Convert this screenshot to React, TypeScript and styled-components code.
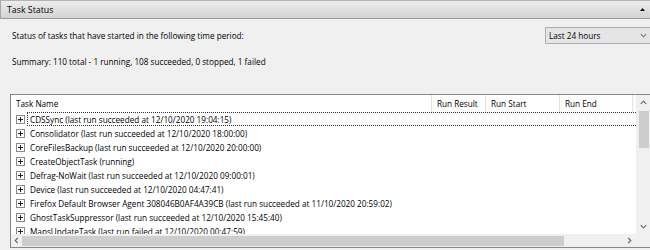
import React from 'react';
import styled, { createGlobalStyle } from 'styled-components';

const GlobalStyle = createGlobalStyle`
  html, body {
    margin: 0;
    padding: 0;
    background: #f0f0f0;
  }
  body {
    width: 650px;
    height: 250px;
    overflow: hidden;
    font-family: "Open Sans", "Noto Sans", sans-serif;
    font-size: 8.2px;
    color: #000;
  }
`;

const tasks = [
  'CDSSync (last run succeeded at 12/10/2020 19:04:15)',
  'Consolidator (last run succeeded at 12/10/2020 18:00:00)',
  'CoreFilesBackup (last run succeeded at 12/10/2020 20:00:00)',
  'CreateObjectTask (running)',
  'Defrag-NoWait (last run succeeded at 12/10/2020 09:00:01)',
  'Device (last run succeeded at 12/10/2020 04:47:41)',
  'Firefox Default Browser Agent 308046B0AF4A39CB (last run succeeded at 11/10/2020 20:59:02)',
  'GhostTaskSuppressor (last run succeeded at 12/10/2020 15:45:40)',
  'MapsUpdateTask (last run failed at 12/10/2020 00:47:59)',
];

const columns = [
  { title: 'Task Name', width: 421 },
  { title: 'Run Result', width: 54 },
  { title: 'Run Start', width: 74 },
  { title: 'Run End', width: 73 },
];

const Panel = styled.div`
  width: 650px;
  height: 250px;
  display: flex;
  flex-direction: column;
  background: #f0f0f0;
`;

const TitleBar = styled.div`
  height: 17px;
  display: flex;
  align-items: center;
  justify-content: space-between;
  padding: 0 5px 0 6px;
  background: linear-gradient(#ededed, #d3d3d3);
  border-top: 1px solid #b4b4b4;
  border-left: 1px solid #a8a8a8;
  border-bottom: 1px solid #9c9c9c;
  font-size: 8.8px;
`;

const Body = styled.div`
  flex: 1;
  display: flex;
  flex-direction: column;
  padding: 8px 0 0 12px;
  min-height: 0;
`;

const PeriodRow = styled.div`
  display: flex;
  align-items: center;
  justify-content: space-between;
  height: 17px;
`;

const Dropdown = styled.div`
  box-sizing: border-box;
  width: 105px;
  height: 17px;
  display: flex;
  align-items: center;
  justify-content: space-between;
  padding: 0 3px 0 3px;
  background: #e5e5e5;
  border: 1px solid #adadad;
  border-right: none;
`;

const Summary = styled.div`
  margin-top: 12px;
`;

const Frame = styled.div`
  margin: 27px 0 0 -2px;
  width: 640px;
  height: 152px;
  border: 1px solid #828790;
  border-right: none;
  background: #fff;
  display: grid;
  grid-template-columns: 1fr 15px;
  grid-template-rows: 139px 13px;
`;

const ListArea = styled.div`
  overflow: hidden;
  display: flex;
  flex-direction: column;
`;

const HeaderRow = styled.div`
  height: 17px;
  display: flex;
  flex-shrink: 0;
`;

const HeaderCell = styled.div<{ $width: number }>`
  width: ${(p) => p.$width}px;
  flex-shrink: 0;
  box-sizing: border-box;
  padding-left: 5px;
  display: flex;
  align-items: center;
  border-right: 1px solid #e5e5e5;
`;

const TreeRow = styled.div`
  height: 14px;
  display: flex;
  align-items: center;
  padding-left: 5px;
  flex-shrink: 0;
  white-space: nowrap;
`;

const ExpandBox = styled.svg`
  width: 9px;
  height: 9px;
  flex-shrink: 0;
`;

const RowLabel = styled.div<{ $focused?: boolean }>`
  flex: 1;
  height: 14px;
  box-sizing: border-box;
  margin-left: 2px;
  padding-left: 2px;
  display: flex;
  align-items: center;
  border: 1px dotted ${(p) => (p.$focused ? '#303030' : 'transparent')};
  border-right: none;
`;

const VScroll = styled.div`
  background: #f0f0f0;
  display: flex;
  flex-direction: column;
  align-items: center;
`;

const HScroll = styled.div`
  background: #f0f0f0;
  display: flex;
  align-items: center;
`;

const Corner = styled.div`
  background: #f0f0f0;
`;

const ArrowButton = styled.div<{ $size: number }>`
  width: ${(p) => p.$size}px;
  height: ${(p) => p.$size}px;
  flex-shrink: 0;
  display: flex;
  align-items: center;
  justify-content: center;
`;

const VThumb = styled.div`
  width: 10px;
  height: 37px;
  background: #cdcdcd;
  margin-top: 1px;
`;

const Spacer = styled.div`
  flex: 1;
`;

const HThumb = styled.div`
  width: 542px;
  height: 10px;
  background: #cdcdcd;
`;

const Chevron = ({ dir, color = '#606060' }: { dir: 'up' | 'down' | 'left' | 'right'; color?: string }) => {
  const rot = { up: 180, down: 0, left: 90, right: -90 }[dir];
  return (
    <svg width="7" height="7" viewBox="0 0 7 7" style={{ transform: `rotate(${rot}deg)` }}>
      <path d="M0.8 2.2 L3.5 4.8 L6.2 2.2" fill="none" stroke={color} strokeWidth="1.1" />
    </svg>
  );
};

const Plus = () => (
  <ExpandBox viewBox="0 0 9 9">
    <rect x="0.5" y="0.5" width="8" height="8" fill="#fff" stroke="#8a8a8a" />
    <path d="M2 4.5 H7 M4.5 2 V7" stroke="#222" strokeWidth="1" />
  </ExpandBox>
);

export default function App() {
  return (
    <Panel>
      <GlobalStyle />
      <TitleBar>
        <span>Task Status</span>
        <svg width="5" height="3" viewBox="0 0 5 3">
          <path d="M0 3 L2.5 0 L5 3 Z" fill="#111" />
        </svg>
      </TitleBar>
      <Body>
        <PeriodRow>
          <span>Status of tasks that have started in the following time period:</span>
          <Dropdown>
            <span>Last 24 hours</span>
            <Chevron dir="down" color="#7a7a7a" />
          </Dropdown>
        </PeriodRow>
        <Summary>Summary: 110 total - 1 running, 108 succeeded, 0 stopped, 1 failed</Summary>
        <Frame>
          <ListArea>
            <HeaderRow>
              {columns.map((c) => (
                <HeaderCell key={c.title} $width={c.width}>
                  {c.title}
                </HeaderCell>
              ))}
            </HeaderRow>
            {tasks.map((t, i) => (
              <TreeRow key={t}>
                <Plus />
                <RowLabel $focused={i === 0}>{t}</RowLabel>
              </TreeRow>
            ))}
          </ListArea>
          <VScroll>
            <ArrowButton $size={15}>
              <Chevron dir="up" />
            </ArrowButton>
            <VThumb />
            <Spacer />
            <ArrowButton $size={15}>
              <Chevron dir="down" />
            </ArrowButton>
          </VScroll>
          <HScroll>
            <ArrowButton $size={11}>
              <Chevron dir="left" />
            </ArrowButton>
            <HThumb />
            <Spacer />
            <ArrowButton $size={13}>
              <Chevron dir="right" />
            </ArrowButton>
          </HScroll>
          <Corner />
        </Frame>
      </Body>
    </Panel>
  );
}
